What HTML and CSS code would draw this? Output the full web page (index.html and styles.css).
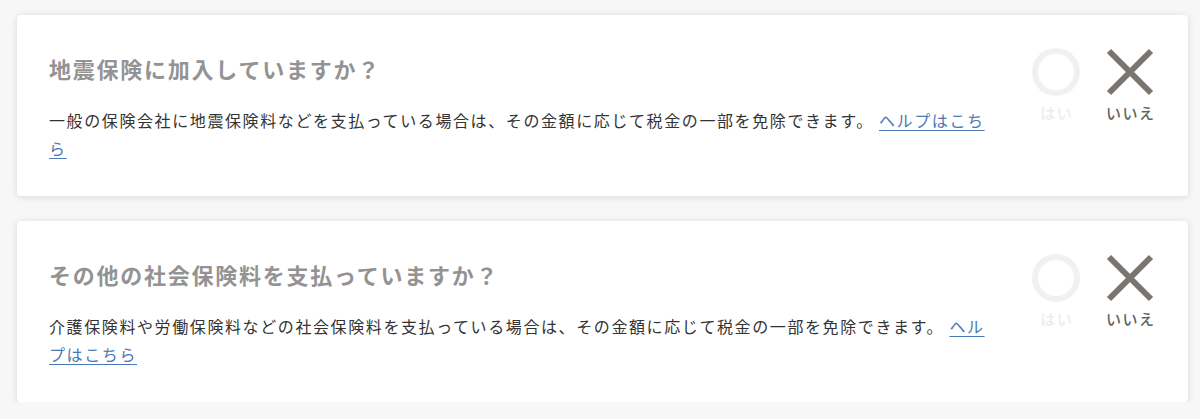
FILE: index.html
```html
<!DOCTYPE html>
<html lang="ja">
<head>
<meta charset="utf-8">
<title>控除の質問</title>
<link rel="stylesheet" href="styles.css">
</head>
<body>
<div class="list">
  <section class="card">
    <div class="text">
      <h2 class="q-title">地震保険に加入していますか？</h2>
      <p class="q-desc">一般の保険会社に地震保険料などを支払っている場合は、その金額に応じて税金の一部を免除できます。 <a href="#" class="help">ヘルプはこちら</a></p>
    </div>
    <div class="options">
      <div class="option yes">
        <svg class="icon" viewBox="0 0 48 48" width="48" height="48"><circle cx="24" cy="24" r="21" fill="none" stroke="currentColor" stroke-width="6"/></svg>
        <span class="label">はい</span>
      </div>
      <div class="option no">
        <svg class="icon" viewBox="0 0 48 48" width="48" height="48"><path d="M3 3 L45 45 M45 3 L3 45" fill="none" stroke="currentColor" stroke-width="6"/></svg>
        <span class="label">いいえ</span>
      </div>
    </div>
  </section>
  <section class="card">
    <div class="text">
      <h2 class="q-title">その他の社会保険料を支払っていますか？</h2>
      <p class="q-desc">介護保険料や労働保険料などの社会保険料を支払っている場合は、その金額に応じて税金の一部を免除できます。 <a href="#" class="help">ヘルプはこちら</a></p>
    </div>
    <div class="options">
      <div class="option yes">
        <svg class="icon" viewBox="0 0 48 48" width="48" height="48"><circle cx="24" cy="24" r="21" fill="none" stroke="currentColor" stroke-width="6"/></svg>
        <span class="label">はい</span>
      </div>
      <div class="option no">
        <svg class="icon" viewBox="0 0 48 48" width="48" height="48"><path d="M3 3 L45 45 M45 3 L3 45" fill="none" stroke="currentColor" stroke-width="6"/></svg>
        <span class="label">いいえ</span>
      </div>
    </div>
  </section>
</div>
</body>
</html>
```

FILE: styles.css
```css
html, body {
  margin: 0;
  padding: 0;
  background: #f7f7f7;
}
body {
  font-family: "Noto Sans CJK JP", "Noto Sans", sans-serif;
  color: #333;
}
.list {
  display: flex;
  flex-direction: column;
  gap: 25px;
  padding: 15px 12px 0 17px;
}
.card {
  display: flex;
  align-items: flex-start;
  gap: 32px;
  background: #fff;
  border-radius: 4px;
  box-shadow: 0 1px 7px rgba(0, 0, 0, 0.13);
  padding: 38px 28px 34px 32px;
}
.text {
  flex: 1;
  min-width: 0;
}
.q-title {
  margin: 0;
  font-size: 22px;
  line-height: 30px;
  font-weight: 700;
  letter-spacing: 0.08em;
  color: #939393;
}
.q-desc {
  margin: 23px 0 0;
  font-size: 16px;
  line-height: 28px;
  letter-spacing: 0.1em;
  color: #333;
}
.help {
  color: #4a78b4;
  text-decoration: underline;
  text-underline-offset: 3px;
}
.options {
  display: flex;
  gap: 14px;
  margin-top: -5px;
}
.option {
  width: 60px;
  display: flex;
  flex-direction: column;
  align-items: center;
}
.icon {
  display: block;
  width: 48px;
  height: 48px;
}
.label {
  margin-top: 7px;
  font-size: 15px;
  line-height: 20px;
  font-weight: 500;
  letter-spacing: 0.1em;
  margin-right: -0.1em;
}
.yes {
  color: #f2f1ef;
}
.yes .label {
  color: #ececec;
}
.no {
  color: #7a766f;
}
.no .label {
  color: #616161;
}
```
